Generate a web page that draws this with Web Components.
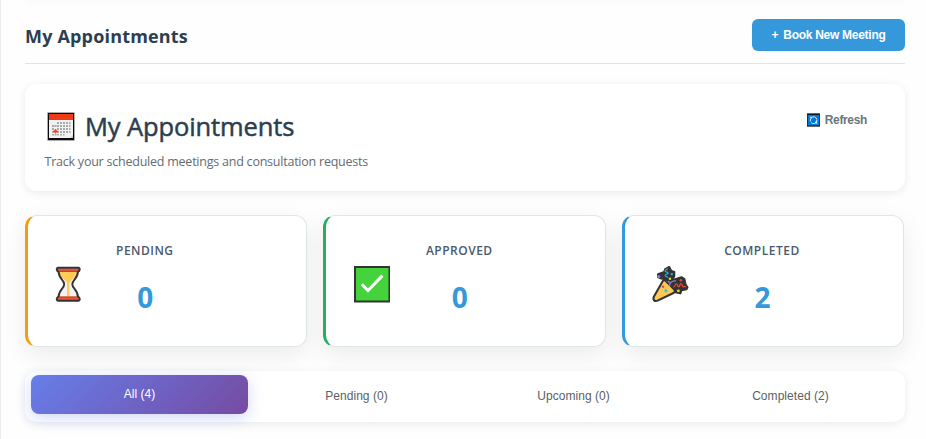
<!DOCTYPE html>
<html lang="en">
<head>
<meta charset="utf-8">
<title>My Appointments</title>
<style>
html,body{margin:0;height:439px;overflow:hidden;background:#fefefe}
body{font-family:"Open Sans","Noto Sans",sans-serif;color:#2c3e50}
</style>
</head>
<body>
<appointments-page></appointments-page>
<script>
const define=(name,html,init)=>customElements.define(name,class extends HTMLElement{
  connectedCallback(){
    if(this.shadowRoot)return;
    const t=document.createElement('template');t.innerHTML=html;
    this.attachShadow({mode:'open'}).append(t.content.cloneNode(true));
    if(init)init(this);
  }
});
const icons={
calendar:`<svg viewBox="0 0 28 29"><rect x=".4" y=".4" width="27.2" height="28.2" fill="#777"/><rect x="1" y="1" width="26" height="27" fill="#0c0c0c"/><path fill="#f2f2f2" d="M2 7h24v19H2z"/><path fill="#f03a17" d="M2 2h24v6H2z"/><path fill="#c8c8c8" d="M23 26l3-3v3z"/><g fill="#aaa"><path d="M10 10h2v2h-2zM13 10h2v2h-2zM16 10h2v2h-2zM19 10h2v2h-2zM22 10h1.5v2H22zM5 13h2v2H5zM7.500 13h2v2h-2zM10 13h2v2h-2zM13 13h2v2h-2zM16 13h2v2h-2zM19 13h2v2h-2zM22 13h1.500v2H22zM5 16h2v2H5zM10 16h2v2h-2zM13 16h2v2h-2zM16 16h2v2h-2zM19 16h2v2h-2zM22 16h1.500v2H22zM5 19h2v2H5zM10 19h2v2h-2zM13 19h2v2h-2zM16 19h2v2h-2zM19 19h2v2h-2zM22 19h1.500v2H22zM5 22h2v1.500H5zM7.500 22h2v1.500h-2zM10 22h2v1.500h-2zM13 22h2v1.500h-2zM16 22h1.500v1.500H16z"/></g><path fill="#f34a2b" d="M8.500 16.800l1.300 1.500 1.500.9-1.500 1.100-1.300 1.500-1.400-1.500-1.400-.9 1.400-1.100z"/></svg>`,
refresh:`<svg viewBox="0 0 13 14"><path fill="#666" d="M0 0h13v14H0z"/><path fill="#071a2c" d="M.3 1h12.400v12H.3z"/><path fill="#0078d7" d="M1 2h11v10.500H1z"/><g fill="none" stroke="#d9efff" stroke-width="1"><path d="M4.300 4.700A3.300 3.300 0 0 1 9.700 6M9.700 8a3.300 3.300 0 0 1-5.500 1.700M3.400 8.300V5.600M9.800 8.800V6.400"/></g><path fill="#fff" d="M2.500 3.800h2.200V6zM8.300 10.600h2.500L8.600 8.300z"/></svg>`,
hourglass:`<svg viewBox="0 0 36 36"><path fill="#f2f2f2" d="M8 4h20c0 8-6 9-6 14s6 6 6 14H8c0-8 6-9 6-14S8 12 8 4z"/><path fill="#ffcc58" d="M9.500 6h17c-.3 5.700-5.500 7-7.300 11v13h6v2H10.500v-2h6.300V17C15 13 9.700 11.500 9.500 6z"/><path fill="#ef5139" d="M7 2.200h22v3.500H7zM7 30.300h22v3.500H7z"/><path fill="#b94535" d="M8 4.600h20v1.400H8zM8 30h20v1H8z"/><path d="M8.500 5.500C8.500 13 14 13.500 14 18s-5.500 5-5.500 12.500M27.500 5.500C27.500 13 22 13.500 22 18s5.500 5 5.500 12.500" fill="none" stroke="#333" stroke-width="1.900"/><path d="M8.500 5.700C6 5 6.200 1.800 8 1.800h20c1.800 0 2 3.200-.5 3.900M8.500 30.300C6 31 6.200 34.200 8 34.200h20c1.800 0 2-3.200-.5-3.900" fill="none" stroke="#333" stroke-width="1.900"/></svg>`,
check:`<svg viewBox="0 0 36 36"><path fill="#333" d="M0 0h36v36H0z"/><path fill="#45d33b" d="M2 2h32v32H2z"/><path d="M7.800 18l6 6.200L28 9.500" fill="none" stroke="#fff" stroke-width="3"/></svg>`,
party:`<svg viewBox="0 0 36 36"><g fill="#333" stroke="#333" stroke-width="2" stroke-linejoin="round"><path d="M12 6l1-3 4-2 2 4 3 1v4l-3 5-6-2-5-1-2-1V8z"/><path d="M17 18l3-4 6-2 3-1 3 2 1 5 2 3-1 2-5 1-1 3-5-1-5-4z"/></g><path fill="#ffc857" stroke="#333" stroke-width="2" stroke-linejoin="round" d="M10.500 15c1-1.600 2.500-.9 3.600.2l7.400 7.500c1.500 1.700 1.400 3.200-.8 4.200L5.500 34.200C2.400 35.500.6 33 1.800 30.400z"/><g fill="none" stroke-width="1.200"><path stroke="#26afe3" d="M15.500 2.500c-1 1.500-3 1-2.500 2.500s3 .5 2.800 2-3 .8-2.800 2.400 2.500.6 2.500 2.200"/><path stroke="#8d79d5" stroke-width="1.600" d="M17 19.500c.5-3 3.300-5 6.500-5"/><path stroke="#f04d37" d="M21 20.500c2.500.5 1.500-3 3-3s1 3.500 2.500 3 .7-3.500 2.300-3 1 3.700 2.500 3 1-.2 2.500 0"/><path stroke="#3abce6" d="M12 24.500h3.500M13.700 22.800v3.400"/></g><circle cx="10.800" cy="20.500" r="1.200" fill="#f04d37"/><circle cx="6.700" cy="10.300" r="1.500" fill="#8d79d5"/><circle cx="19.500" cy="8" r="1.200" fill="#26afe3"/><circle cx="17.700" cy="12.500" r="1.200" fill="#e9da20"/><circle cx="28.500" cy="14" r="1.200" fill="#f04d37"/><circle cx="26" cy="24.500" r="1.400" fill="#e9da20"/></svg>`
};
define('ui-icon','<style>:host{display:block;flex:none}svg{display:block;width:100%;height:100%}</style>',e=>e.shadowRoot.innerHTML+=icons[e.getAttribute('name')]);
define('page-header',`<style>
:host{display:flex;justify-content:space-between;align-items:center;box-sizing:border-box;height:57px;border-bottom:1px solid #dfe4e9}
h1{margin:1px 0 0;font-size:18px;font-weight:700;line-height:26px;letter-spacing:.18px;white-space:nowrap}
button{box-sizing:border-box;width:153px;height:32px;border:0;border-radius:6px;background:#3498db;color:#fff;font:bold 12px/32px "Liberation Sans",sans-serif;letter-spacing:-.28px;padding:0;white-space:nowrap}
span{margin-right:2px}
</style><h1><slot></slot></h1><button><span>+</span> Book New Meeting</button>`);
define('intro-card',`<style>
:host{display:flex;justify-content:space-between;box-sizing:border-box;height:107px;padding:25px 38px 0 19.500px;border-radius:12px;background:#fff;box-shadow:0 2px 10px #00000014}
.title{display:flex;align-items:center;gap:10px;height:34px;padding-left:2.500px}
.title ui-icon{width:28px;height:29px}
h2{margin:0;font-size:25.500px;line-height:34px;font-weight:400;letter-spacing:-.12px;-webkit-text-stroke:.5px #2c3e50;white-space:nowrap}
p{margin:9px 0 0;font-size:12.5px;line-height:19px;letter-spacing:-.23px;color:#646b71;white-space:nowrap}
.refresh{display:flex;align-items:center;gap:5px;height:22px;font:bold 12px "Liberation Sans",sans-serif;letter-spacing:-.35px;color:#6c757d;white-space:nowrap}
.refresh ui-icon{width:13px;height:14px}
</style><div><div class="title"><ui-icon name="calendar"></ui-icon><h2>My Appointments</h2></div><p>Track your scheduled meetings and consultation requests</p></div><div class="refresh"><ui-icon name="refresh"></ui-icon><span>Refresh</span></div>`);
define('stat-card',`<style>
:host{display:flex;align-items:flex-start;box-sizing:border-box;height:132px;padding:0 0 0 var(--inset,27.5px);border:1px solid #dfe6e9;border-left:3px solid var(--accent);border-radius:12px;background:#fff;box-shadow:0 8px 25px #00000014}
ui-icon{width:36.500px;height:36.500px;margin:50px 0 0}
div{text-align:center;margin:25px 0 0 var(--gap)}
h3{margin:0;font-size:12px;font-weight:600;line-height:20px;color:#4b5a6b;letter-spacing:.5px;white-space:nowrap}
strong{display:block;margin-top:17px;padding-left:1px;font-size:28px;line-height:38px;font-weight:700;color:#3498db}
</style><ui-icon></ui-icon><div><h3><slot></slot></h3><strong></strong></div>`,e=>{
 const old=e.shadowRoot.querySelector('ui-icon'),i=document.createElement('ui-icon');i.setAttribute('name',e.getAttribute('icon'));old.replaceWith(i);
 e.shadowRoot.querySelector('strong').textContent=e.getAttribute('value');
});
define('tab-item',`<style>
:host{display:block;flex:1;height:38.500px;border-radius:8px;text-align:center;color:#5a5f64;font:12px/38px "Liberation Sans",sans-serif;letter-spacing:.05px;white-space:nowrap}
:host([active]){transform:translateY(-2px);color:#fff;background:linear-gradient(135deg,#667eea,#764ba2);box-shadow:0 4px 15px #667eea4d}
</style><slot></slot>`);
define('tab-bar',`<style>:host{display:flex;box-sizing:border-box;height:51px;padding:6px;border-radius:12px;background:#fff;box-shadow:0 2px 10px #00000014}</style><slot></slot>`);
define('appointments-page',`<style>
:host{display:block;box-sizing:border-box;height:439px;border-left:1px solid #ebebeb;padding:0 21px 0 24px;overflow:hidden}
.above{height:7px;margin-top:-7px;box-shadow:0 2px 8px #00000008}
page-header{margin-top:7px}
intro-card{margin-top:20px}
.stats{display:grid;grid-template-columns:repeat(3,282.200px);gap:16.200px;margin-top:24px}
tab-bar{margin-top:24px}
</style><div class="above"></div><page-header>My Appointments</page-header><intro-card></intro-card>
<div class="stats"><stat-card icon="hourglass" value="0" style="--accent:#f39c12;--inset:21.5px;--gap:30px">PENDING</stat-card><stat-card icon="check" value="0" style="--accent:#27ae60;--gap:35.5px">APPROVED</stat-card><stat-card icon="party" value="2" style="--accent:#3498db;--gap:35.5px">COMPLETED</stat-card></div>
<tab-bar><tab-item active>All (4)</tab-item><tab-item>Pending (0)</tab-item><tab-item>Upcoming (0)</tab-item><tab-item>Completed (2)</tab-item></tab-bar>`);
</script>
</body>
</html>
